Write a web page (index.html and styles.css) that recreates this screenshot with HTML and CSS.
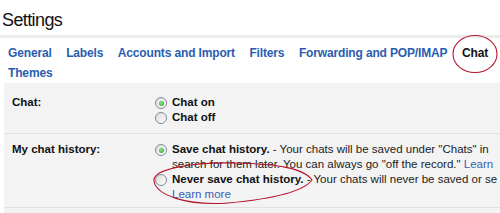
FILE: index.html
```html
<!DOCTYPE html>
<html lang="en">
<head>
    <meta charset="UTF-8">
    <title>Settings - Chat</title>
    <link rel="stylesheet" href="styles.css">
</head>
<body>

    <div class="page">
        <h1 class="title">Settings</h1>
        <div class="title-rule"></div>

        <!-- Settings tabs -->
        <div class="tabs">
            <a href="#">General</a>
            <a href="#">Labels</a>
            <a href="#">Accounts and Import</a>
            <a href="#">Filters</a>
            <a href="#">Forwarding and POP/IMAP</a>
            <span class="tab-current">Chat</span>
            <a href="#">Themes</a>
        </div>

        <!-- Chat settings -->
        <div class="panel">
            <div class="row first">
                <div class="label">Chat:</div>
                <div class="opts">
                    <div class="opt"><span class="radio checked"></span><span class="opt-text"><b>Chat on</b></span></div>
                    <div class="opt"><span class="radio"></span><span class="opt-text"><b>Chat off</b></span></div>
                </div>
            </div>
            <div class="row second">
                <div class="label">My chat history:</div>
                <div class="opts">
                    <div class="opt">
                        <span class="radio checked"></span>
                        <span class="opt-text"><b>Save chat history.</b> - Your chats will be saved under "Chats" in<br>search for them later. You can always go "off the record." <a href="#">Learn</a></span>
                    </div>
                    <div class="opt">
                        <span class="radio"></span>
                        <span class="opt-text"><b>Never save chat history.</b> - Your chats will never be saved or se<br><a href="#">Learn more</a></span>
                    </div>
                </div>
            </div>
        </div>

        <!-- hand drawn marks on top of the screenshot -->
        <svg class="marks" width="500" height="213" viewBox="0 0 500 213">
            <ellipse cx="475" cy="54" rx="22" ry="18.5" />
            <path d="M 154 181 C 152 169, 192 162, 236 163 C 276 164, 304 168, 312 180 C 303 192, 272 199, 228 203 C 186 206, 156 195, 154 181 Z" />
        </svg>
    </div>

</body>
</html>
```

FILE: styles.css
```css
/* Base */
html, body {
    margin: 0;
    padding: 0;
    overflow: hidden;
}

body {
    background: #fff;
    color: #222;
    font-family: "Liberation Sans", Arial, sans-serif;
}

.page {
    position: relative;
    width: 500px;
    height: 213px;
    overflow: hidden;
}

/* Title */
.title {
    margin: 0;
    padding: 9px 0 0 2px;
    font-size: 18px;
    font-weight: normal;
    line-height: 22px;
    letter-spacing: -0.6px;
    color: #111;
}

.title-rule {
    margin-top: 4px;
    height: 3px;
    background: #ececec;
}

/* Tabs */
.tabs {
    display: flex;
    flex-wrap: wrap;
    column-gap: 14.5px;
    padding: 6px 0 0 8px;
    font-size: 12px;
    font-weight: bold;
    line-height: 19px;
    letter-spacing: -0.15px;
    height: 39px;
}

.tabs a {
    color: #2a5db0;
    text-decoration: none;
}

.tab-current {
    color: #111;
}

/* Panel */
.panel {
    margin-left: 4px;
    background: #f3f3f3;
    font-size: 11.5px;
    line-height: 15px;
    height: 140px;
}

.row {
    display: flex;
    border-bottom: 1px solid #e1e1e1;
}

.row.first {
    padding: 12px 0 8px;
}

.row.second {
    padding: 8px 0 5px;
}

.label {
    width: 143px;
    padding-left: 8px;
    flex: none;
    font-weight: bold;
    color: #111;
}

.opts {
    flex: none;
}

.opt {
    display: flex;
    align-items: flex-start;
}

.opt-text {
    white-space: nowrap;
}

.opt-text b {
    color: #111;
}

.opt-text a {
    color: #3a5fb8;
    text-decoration: none;
}

/* Radio buttons, drawn like the old XP ones */
.radio {
    flex: none;
    box-sizing: border-box;
    width: 12px;
    height: 12px;
    margin: 2px 5px 0 0;
    border: 1px solid #7c8ea4;
    border-radius: 50%;
    background: linear-gradient(135deg, #dcdcd6, #fff);
    position: relative;
}

.radio.checked::after {
    content: '';
    position: absolute;
    left: 2.5px;
    top: 2.5px;
    width: 5px;
    height: 5px;
    border-radius: 50%;
    background: radial-gradient(circle at 40% 40%, #8ee08e, #23a323);
}

/* Red marks */
.marks {
    position: absolute;
    left: 0;
    top: 0;
    pointer-events: none;
}

.marks ellipse, .marks path {
    fill: none;
    stroke: #b3142c;
    stroke-width: 1.1;
}
```
